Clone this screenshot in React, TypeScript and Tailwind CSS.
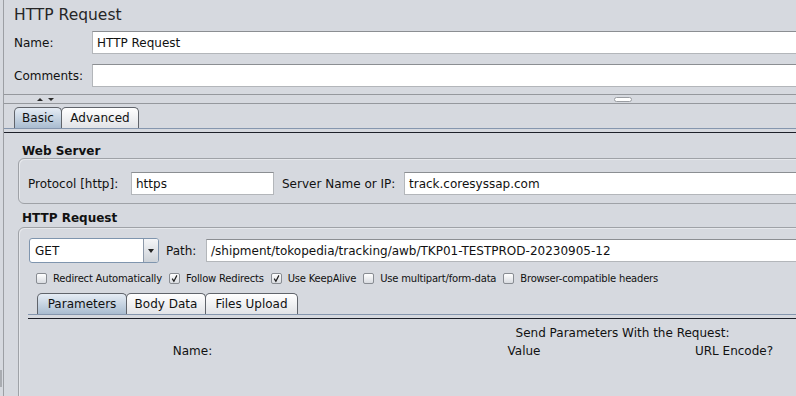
import React from "react";

const sans = "font-['DejaVu_Sans','Liberation_Sans',sans-serif]";

function Field({ value, className = "" }: { value?: string; className?: string }) {
  return (
    <div
      className={`h-[23px] bg-white border border-[#b3b6ba] border-t-[#8b8e92] pl-[4px] pt-px flex items-center text-[12px] text-[#111] whitespace-nowrap ${className}`}
    >
      {value}
    </div>
  );
}

function Tab({ label, className, selected }: { label: string; className: string; selected?: boolean }) {
  return (
    <div
      className={`h-[21px] -ml-px first:ml-0 flex items-center justify-center rounded-t-[5px] border border-b-0 border-[#60646b] text-[12px] text-[#111] ${
        selected ? "bg-linear-to-b from-[#e6edf5] to-[#a9bcd0]" : "bg-linear-to-b from-white to-[#e1e3e7]"
      } ${className}`}
    >
      {label}
    </div>
  );
}

function TabStrip({ children, className = "" }: { children: React.ReactNode; className?: string }) {
  return (
    <div className={className}>
      {children}
      <div className="h-px bg-[#8596ae]" />
      <div className="h-[3px]" />
      <div className="h-px bg-[#1d2029]" />
    </div>
  );
}

function Check({ label, checked }: { label: string; checked?: boolean }) {
  return (
    <div className="flex items-center gap-[6px]">
      <div className="w-[11px] h-[11px] rounded-[2px] border border-[#888c92] bg-linear-to-b from-white to-[#d9dce1] flex items-center justify-center">
        {checked && (
          <svg width="9" height="9" viewBox="0 0 9 9">
            <path d="M2.2 4.6 L3.9 7.2 L6.9 1.4" fill="none" stroke="#1f1f1f" strokeWidth="1.2" />
          </svg>
        )}
      </div>
      <span className="text-[10px] tracking-[-0.2px] text-[#111]">{label}</span>
    </div>
  );
}

function GroupBox({ children, className = "" }: { children: React.ReactNode; className?: string }) {
  return (
    <div className={`rounded-[6px] border border-[#9fa2a7] shadow-[inset_1px_1px_0_#e6e8ec] ${className}`}>
      {children}
    </div>
  );
}

export default function App() {
  return (
    <div className={`w-[796px] h-[396px] overflow-hidden bg-[#d6d9df] flex items-start ${sans} text-[#111]`}>
      {/* left gutter */}
      <div className="w-[3px] h-[396px] shrink-0">
        <div className="h-[370px]" />
        <div className="w-[2px] h-[17px] bg-[#a9acb1]" />
      </div>
      <div className="w-px h-[396px] shrink-0 bg-[#9c9fa4]" />

      <div className="w-[1240px] shrink-0">
        {/* title */}
        <div className="h-[31px] pl-[10px] pt-[5px] text-[15.5px] leading-[20px] text-[#262626]">HTTP Request</div>

        <div className="flex items-center pl-[10px]">
          <span className="w-[78px] text-[12px]">Name:</span>
          <Field value="HTTP Request" className="flex-1" />
        </div>
        <div className="flex items-center pl-[10px] mt-[10px]">
          <span className="w-[78px] text-[12px]">Comments:</span>
          <Field className="flex-1" />
        </div>

        {/* splitter */}
        <div className="mt-[7px] h-px bg-[#95989d]" />
        <div className="h-[8px] flex items-center">
          <div className="ml-[33px] w-0 h-0 border-x-[3px] border-x-transparent border-b-[3px] border-b-[#2a2a2a]" />
          <div className="ml-[5px] w-0 h-0 border-x-[3px] border-x-transparent border-t-[3px] border-t-[#2a2a2a]" />
          <div className="ml-[560px] w-[18px] h-[5px] rounded-[3px] border border-[#9a9da2] bg-white" />
        </div>
        <div className="h-px bg-[#95989d]" />
        <div className="h-[3px]" />

        {/* main tabs */}
        <TabStrip>
          <div className="flex pl-[10px]">
            <Tab label="Basic" className="w-[48px]" selected />
            <Tab label="Advanced" className="w-[78px]" />
          </div>
        </TabStrip>

        <div className="pl-[14px] pt-[11px]">
          <div className="pl-[4px] text-[12px] font-bold leading-[14px]">Web Server</div>
          <GroupBox className="pt-[13px] pb-[8px] pl-[9px]">
            <div className="flex items-center">
              <span className="w-[103px] text-[12px]">Protocol [http]:</span>
              <Field value="https" className="w-[143px]" />
              <span className="ml-[8px] w-[122px] text-[12px]">Server Name or IP:</span>
              <Field value="track.coresyssap.com" className="flex-1" />
            </div>
          </GroupBox>

          <div className="mt-[7px] pl-[4px] text-[12px] font-bold leading-[14px]">HTTP Request</div>
          <GroupBox className="mt-[2px] pt-[10px] h-[300px]">
            <div className="flex items-center pl-[10px]">
              <div className="w-[130px] h-[25px] rounded-[3px] border border-[#7f95ae] bg-white flex">
                <div className="flex-1 pl-[5px] flex items-center text-[12px]">GET</div>
                <div className="w-[15px] border-l border-[#8d99a9] rounded-r-[2px] bg-linear-to-b from-[#f5f6f8] to-[#cdd2d8] flex items-center justify-center">
                  <div className="w-0 h-0 border-x-[3px] border-x-transparent border-t-[4px] border-t-[#222]" />
                </div>
              </div>
              <span className="ml-[7px] w-[40px] text-[12px]">Path:</span>
              <Field value="/shipment/tokopedia/tracking/awb/TKP01-TESTPROD-20230905-12" className="flex-1" />
            </div>

            <div className="mt-[7px] h-[16px] pl-[17px] flex items-center gap-[7px]">
              <Check label="Redirect Automatically" />
              <Check label="Follow Redirects" checked />
              <Check label="Use KeepAlive" checked />
              <Check label="Use multipart/form-data" />
              <Check label="Browser-compatible headers" />
            </div>

            <div className="ml-[9px] mt-[7px] w-[1189px]">
              <TabStrip>
                <div className="flex pl-[9px]">
                  <Tab label="Parameters" className="w-[90px]" selected />
                  <Tab label="Body Data" className="w-[80px]" />
                  <Tab label="Files Upload" className="w-[93px]" />
                </div>
              </TabStrip>
              <div className="mt-[7px] text-center text-[12px] leading-[15px]">Send Parameters With the Request:</div>
              <div className="mt-[3px] flex text-[12px] leading-[15px]">
                <span className="w-[329px] text-center">Name:</span>
                <span className="w-[334px] text-center">Value</span>
                <span className="w-[86px] text-center">URL Encode?</span>
              </div>
            </div>
          </GroupBox>
        </div>
      </div>
    </div>
  );
}
